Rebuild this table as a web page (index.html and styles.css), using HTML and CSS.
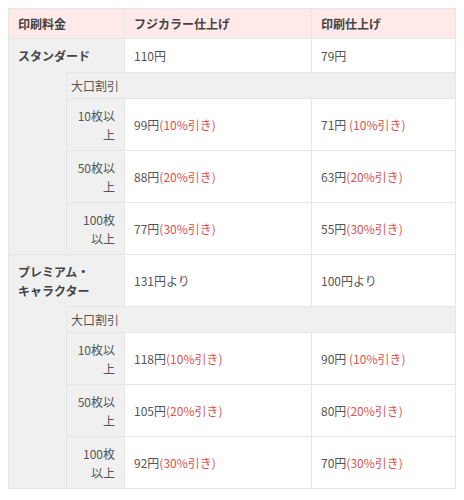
FILE: index.html
```html
<!DOCTYPE html>
<html lang="ja">
<head>
<meta charset="utf-8">
<link rel="stylesheet" href="styles.css">
</head>
<body>
<table class="price">
  <colgroup>
    <col class="c-a"><col class="c-b"><col class="c-c"><col class="c-d">
  </colgroup>
  <thead>
    <tr>
      <th colspan="2" class="head">印刷料金</th>
      <th class="head">フジカラー仕上げ</th>
      <th class="head">印刷仕上げ</th>
    </tr>
  </thead>
  <tbody>
    <tr>
      <th colspan="2" class="kind">スタンダード</th>
      <td>110円</td>
      <td>79円</td>
    </tr>
    <tr>
      <td rowspan="4" class="blank"></td>
      <td colspan="3" class="bulk">大口割引</td>
    </tr>
    <tr>
      <th class="qty">10枚以上</th>
      <td>99円<span class="off">(10%引き)</span></td>
      <td>71円 <span class="off">(10%引き)</span></td>
    </tr>
    <tr>
      <th class="qty">50枚以上</th>
      <td>88円<span class="off">(20%引き)</span></td>
      <td>63円<span class="off">(20%引き)</span></td>
    </tr>
    <tr>
      <th class="qty">100枚以上</th>
      <td>77円<span class="off">(30%引き)</span></td>
      <td>55円<span class="off">(30%引き)</span></td>
    </tr>
    <tr>
      <th colspan="2" class="kind">プレミアム・<br>キャラクター</th>
      <td>131円より</td>
      <td>100円より</td>
    </tr>
    <tr>
      <td rowspan="4" class="blank"></td>
      <td colspan="3" class="bulk">大口割引</td>
    </tr>
    <tr>
      <th class="qty">10枚以上</th>
      <td>118円<span class="off">(10%引き)</span></td>
      <td>90円 <span class="off">(10%引き)</span></td>
    </tr>
    <tr>
      <th class="qty">50枚以上</th>
      <td>105円<span class="off">(20%引き)</span></td>
      <td>80円<span class="off">(20%引き)</span></td>
    </tr>
    <tr>
      <th class="qty">100枚以上</th>
      <td>92円<span class="off">(30%引き)</span></td>
      <td>70円<span class="off">(30%引き)</span></td>
    </tr>
  </tbody>
</table>
</body>
</html>
```

FILE: styles.css
```css
body {
  margin: 8px;
  background: #fff;
  font-family: "Noto Sans CJK JP", "Noto Sans", sans-serif;
  font-size: 12px;
  color: #555;
}

.price {
  border-collapse: collapse;
  table-layout: fixed;
  width: 447px;
  line-height: 19px;
}

.c-a { width: 58px; }
.c-b { width: 58px; }
.c-c { width: 187px; }
.c-d { width: 144px; }

.price th,
.price td {
  border: 1px solid #e6e6e6;
  padding: 7px 9px;
  text-align: left;
  vertical-align: middle;
}

.price th {
  font-weight: normal;
}

.price .head {
  background: #ffe9e9;
  color: #444;
  font-weight: bold;
  padding: 5px 9px;
}

.price .kind {
  background: #f0f0f0;
  color: #444;
  font-weight: bold;
  vertical-align: top;
  padding: 7px 9px 6px;
}

.price .blank {
  background: #f0f0f0;
  border-top-style: hidden;
}

.price .bulk {
  background: #f0f0f0;
  padding: 3px 4px;
}

.price .qty {
  background: #f0f0f0;
  text-align: right;
  padding: 7px 9px 6px;
}

.off {
  color: #d9534f;
}
```
